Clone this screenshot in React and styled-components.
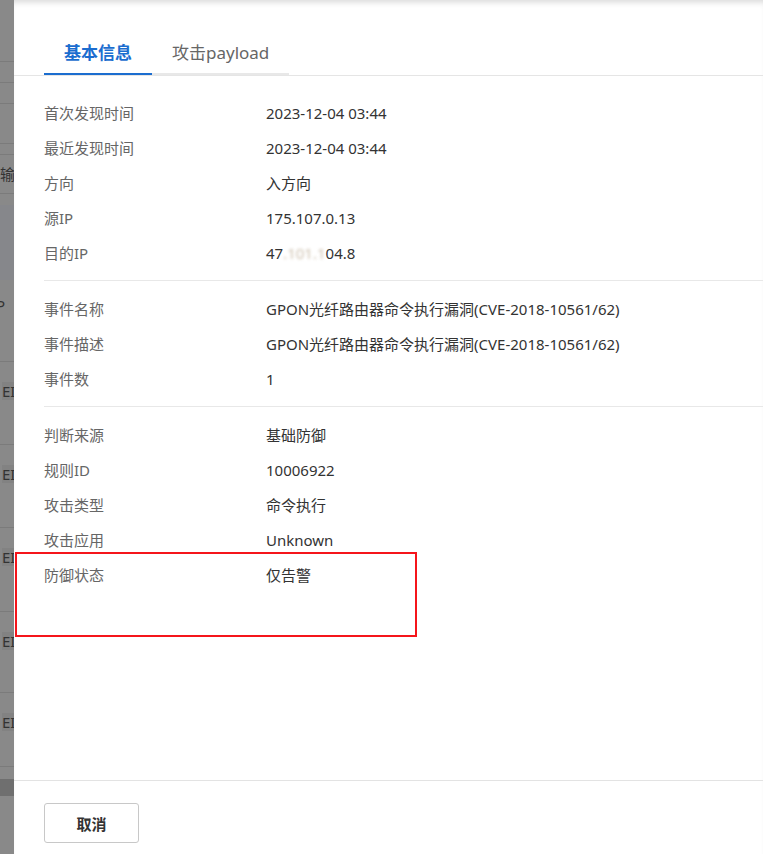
import React from 'react';
import styled, { createGlobalStyle } from 'styled-components';

const GlobalStyle = createGlobalStyle`
  html, body {
    margin: 0;
    padding: 0;
    height: 100%;
  }
  body {
    font-family: "Noto Sans", "Noto Sans CJK SC", sans-serif;
    background: #888;
  }
  #root {
    height: 100%;
  }
`;

const Page = styled.div`
  display: flex;
  height: 854px;
  overflow: hidden;
`;

const Backdrop = styled.div`
  width: 14px;
  flex-shrink: 0;
  background: #898989;
  display: flex;
  flex-direction: column;
  overflow: hidden;
`;

const BackRow = styled.div`
  height: ${(p) => p.h}px;
  flex-shrink: 0;
  box-sizing: border-box;
  border-bottom: ${(p) => (p.line ? '1px solid #7b7b7b' : 'none')};
  background: ${(p) => p.bg || 'transparent'};
  display: flex;
  align-items: ${(p) => (p.pt ? 'flex-start' : 'center')};
  padding: ${(p) => p.pt || 0}px 0 0 2px;
  font-size: 15px;
  color: #333;
  white-space: nowrap;
  line-height: 18px;
`;

const BackText = styled.span`
  background: ${(p) => p.bg || 'transparent'};
  margin-left: ${(p) => p.ml || 0}px;
`;

const Drawer = styled.div`
  flex: 1;
  background: #fff;
  display: flex;
  flex-direction: column;
  position: relative;
  box-shadow: inset 0 6px 6px -4px rgba(0, 0, 0, 0.16);
`;

const Body = styled.div`
  flex: 1;
  padding-top: 30px;
`;

const TabBar = styled.div`
  display: flex;
  padding-left: 30px;
  border-bottom: 1px solid #e5e5e5;
`;

const Tab = styled.div`
  padding: 13px 20px 10px;
  font-size: 17px;
  line-height: 20px;
  font-weight: ${(p) => (p.active ? 600 : 400)};
  color: ${(p) => (p.active ? '#1b6dcf' : '#666')};
  border-bottom: 2px solid ${(p) => (p.active ? '#1b6dcf' : '#e8e8e8')};
`;

const Content = styled.div`
  padding: 9px 0 0 30px;
`;

const Section = styled.div`
  padding: 10px 0;
  border-bottom: ${(p) => (p.last ? 'none' : '1px solid #e8e8e8')};
`;

const Row = styled.div`
  display: flex;
  height: 35px;
  align-items: center;
  font-size: 15px;
  line-height: 20px;
`;

const Label = styled.div`
  width: 222px;
  flex-shrink: 0;
  color: #666;
`;

const Value = styled.div`
  color: #333;
`;

const Blur = styled.span`
  filter: blur(1.4px);
  color: #b7a48a;
  opacity: 0.7;
`;

const Footer = styled.div`
  height: 74px;
  box-sizing: border-box;
  border-top: 1px solid #e3e3e3;
  padding: 22px 0 0 30px;
`;

const Button = styled.button`
  width: 95px;
  height: 40px;
  border: 1px solid #c8c8c8;
  border-radius: 3px;
  background: #fff;
  font-family: inherit;
  font-size: 15px;
  font-weight: 600;
  color: #333;
  cursor: pointer;
`;

const Highlight = styled.div`
  position: absolute;
  left: 1px;
  top: 552px;
  width: 402px;
  height: 85px;
  box-sizing: border-box;
  border: 2px solid #f5151b;
  pointer-events: none;
`;

const backRows = [
  { h: 62, line: true },
  { h: 21, line: true },
  { h: 21, line: true },
  { h: 40, line: true },
  { h: 11, line: true },
  { h: 39, line: true, text: '输入', ml: -2 },
  { h: 11 },
  { h: 75, bg: '#86878b' },
  { h: 82, line: true, text: 'P', ml: -6, pt: 16 },
  { h: 83, line: true, text: 'EI', pt: 20, tbg: '#828282' },
  { h: 83, line: true, text: 'EI', pt: 20, tbg: '#828282' },
  { h: 84, line: true, text: 'EI', pt: 20, tbg: '#828282' },
  { h: 81, line: true, text: 'EI', pt: 20, tbg: '#828282' },
  { h: 74, line: true, text: 'EI', pt: 20, tbg: '#828282' },
  { h: 12 },
  { h: 17, bg: '#6f6f6f' },
  { h: 58 },
];

const sections = [
  [
    ['首次发现时间', '2023-12-04 03:44'],
    ['最近发现时间', '2023-12-04 03:44'],
    ['方向', '入方向'],
    ['源IP', '175.107.0.13'],
    ['目的IP', 'ip'],
  ],
  [
    ['事件名称', 'GPON光纤路由器命令执行漏洞(CVE-2018-10561/62)'],
    ['事件描述', 'GPON光纤路由器命令执行漏洞(CVE-2018-10561/62)'],
    ['事件数', '1'],
  ],
  [
    ['判断来源', '基础防御'],
    ['规则ID', '10006922'],
    ['攻击类型', '命令执行'],
    ['攻击应用', 'Unknown'],
    ['防御状态', '仅告警'],
  ],
];

const App = () => {
  return (
    <>
      <GlobalStyle />
      <Page>
        <Backdrop>
          {backRows.map((r, i) => (
            <BackRow key={i} h={r.h} line={r.line} bg={r.bg} pt={r.pt}>
              {r.text && (
                <BackText ml={r.ml} bg={r.tbg}>
                  {r.text}
                </BackText>
              )}
            </BackRow>
          ))}
        </Backdrop>
        <Drawer>
          <Body>
            <TabBar>
              <Tab active>基本信息</Tab>
              <Tab>攻击payload</Tab>
            </TabBar>
            <Content>
              {sections.map((rows, si) => (
                <Section key={si} last={si === sections.length - 1}>
                  {rows.map(([label, value]) => (
                    <Row key={label}>
                      <Label>{label}</Label>
                      <Value>
                        {value === 'ip' ? (
                          <>
                            47<Blur>.1</Blur>
                            <Blur>01.1</Blur>04.8
                          </>
                        ) : (
                          value
                        )}
                      </Value>
                    </Row>
                  ))}
                </Section>
              ))}
            </Content>
          </Body>
          <Footer>
            <Button>取消</Button>
          </Footer>
          <Highlight />
        </Drawer>
      </Page>
    </>
  );
};

export default App;
